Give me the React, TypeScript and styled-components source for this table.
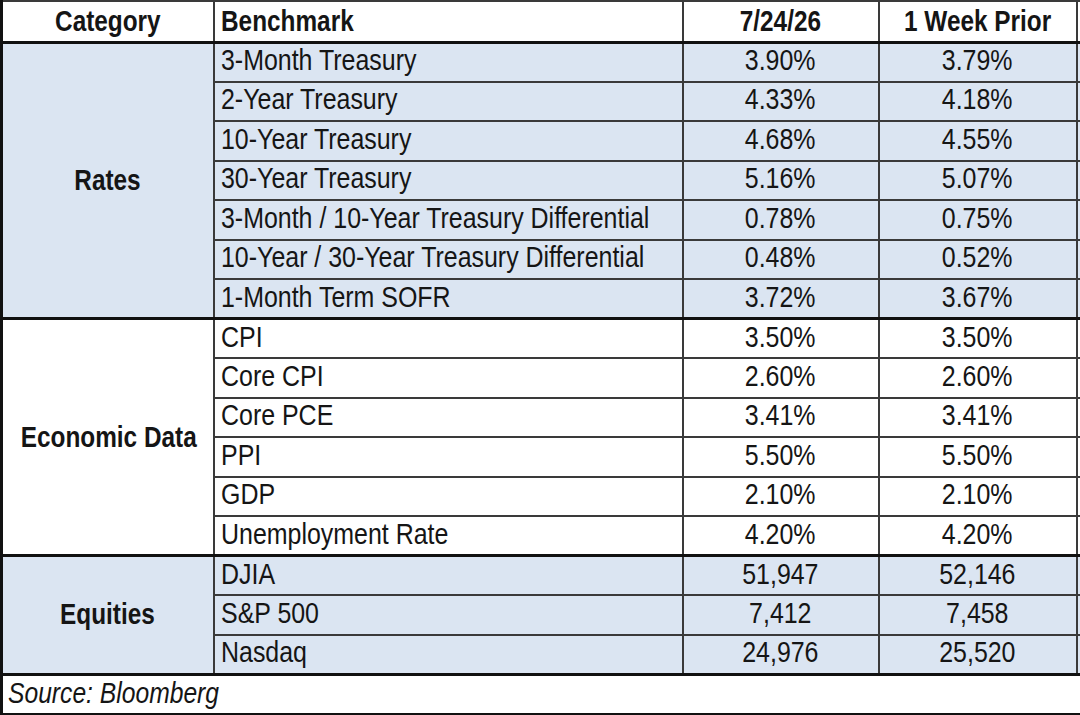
import React from 'react';
import styled, { createGlobalStyle } from 'styled-components';

const GlobalStyle = createGlobalStyle`
  html, body {
    margin: 0;
    padding: 0;
    background: #ffffff;
    overflow: hidden;
  }
`;

const Frame = styled.div`
  width: 1080px;
  height: 715px;
  overflow: hidden;
  background: #ffffff;
`;

const Table = styled.table`
  border-collapse: collapse;
  table-layout: fixed;
  width: 1116px;
  font-family: "Liberation Sans", Arial, sans-serif;
  font-size: 29px;
  color: #151515;
  border-left: 3px solid #111111;
  border-top: 1px solid #333333;
`;

// Excel's Arial Narrow look: squeeze the glyphs horizontally
const Narrow = styled.span<{ $origin?: 'left' | 'center'; $scale?: number }>`
  display: inline-block;
  white-space: nowrap;
  transform: scaleX(${p => p.$scale ?? 0.86});
  transform-origin: ${p => (p.$origin === 'left' ? 'left center' : 'center center')};
`;

const HeadRow = styled.tr`
  height: 41px;
  background: #ffffff;
`;

const HeadCell = styled.th<{ $align?: 'left' | 'center' }>`
  font-weight: bold;
  text-align: ${p => p.$align ?? 'center'};
  padding: 0 ${p => (p.$align === 'left' ? '6px' : '0')};
  border: 2px solid #3a3a3a;
  border-bottom: 3px solid #111111;
  white-space: nowrap;
  overflow: hidden;
`;

const BodyRow = styled.tr<{ $shaded: boolean; $groupStart: boolean }>`
  height: 39.5px;
  background: ${p => (p.$shaded ? '#dbe5f2' : '#ffffff')};

  & > td {
    border-top: ${p => (p.$groupStart ? '3px solid #111111' : '2px solid #3a3a3a')};
  }
`;

const CategoryCell = styled.td`
  font-weight: bold;
  text-align: center;
  vertical-align: middle;
  border: 2px solid #3a3a3a;
  white-space: nowrap;
  overflow: hidden;
`;

const Cell = styled.td<{ $align?: 'left' | 'center' }>`
  text-align: ${p => p.$align ?? 'center'};
  padding: 0 ${p => (p.$align === 'left' ? '6px' : '0')} 3px;
  border: 2px solid #3a3a3a;
  white-space: nowrap;
  overflow: hidden;
  line-height: 1;
`;

const SourceRow = styled.tr`
  height: 40px;

  & > td {
    border-top: 3px solid #111111;
    border-bottom: 2px solid #111111;
  }
`;

const SourceCell = styled.td`
  font-style: italic;
  text-align: left;
  padding: 0 5px 2px;
  white-space: nowrap;
`;

type Row = { name: string; now: string; prior: string };
type Group = { category: string; shaded: boolean; rows: Row[] };

const groups: Group[] = [
  {
    category: 'Rates',
    shaded: true,
    rows: [
      { name: '3-Month Treasury', now: '3.90%', prior: '3.79%' },
      { name: '2-Year Treasury', now: '4.33%', prior: '4.18%' },
      { name: '10-Year Treasury', now: '4.68%', prior: '4.55%' },
      { name: '30-Year Treasury', now: '5.16%', prior: '5.07%' },
      { name: '3-Month / 10-Year Treasury Differential', now: '0.78%', prior: '0.75%' },
      { name: '10-Year / 30-Year Treasury Differential', now: '0.48%', prior: '0.52%' },
      { name: '1-Month Term SOFR', now: '3.72%', prior: '3.67%' },
    ],
  },
  {
    category: 'Economic Data',
    shaded: false,
    rows: [
      { name: 'CPI', now: '3.50%', prior: '3.50%' },
      { name: 'Core CPI', now: '2.60%', prior: '2.60%' },
      { name: 'Core PCE', now: '3.41%', prior: '3.41%' },
      { name: 'PPI', now: '5.50%', prior: '5.50%' },
      { name: 'GDP', now: '2.10%', prior: '2.10%' },
      { name: 'Unemployment Rate', now: '4.20%', prior: '4.20%' },
    ],
  },
  {
    category: 'Equities',
    shaded: true,
    rows: [
      { name: 'DJIA', now: '51,947', prior: '52,146' },
      { name: 'S&P 500', now: '7,412', prior: '7,458' },
      { name: 'Nasdaq', now: '24,976', prior: '25,520' },
    ],
  },
];

const App: React.FC = () => {
  return (
    <>
      <GlobalStyle />
      <Frame>
        <Table>
          <colgroup>
            <col style={{ width: 212 }} />
            <col style={{ width: 469 }} />
            <col style={{ width: 196 }} />
            <col style={{ width: 198 }} />
            <col style={{ width: 41 }} />
          </colgroup>
          <thead>
            <HeadRow>
              <HeadCell><Narrow $scale={0.84}>Category</Narrow></HeadCell>
              <HeadCell $align="left"><Narrow $origin="left" $scale={0.84}>Benchmark</Narrow></HeadCell>
              <HeadCell><Narrow $scale={0.84}>7/24/26</Narrow></HeadCell>
              <HeadCell><Narrow $scale={0.84}>1 Week Prior</Narrow></HeadCell>
              <HeadCell />
            </HeadRow>
          </thead>
          <tbody>
            {groups.map(group =>
              group.rows.map((row, i) => (
                <BodyRow key={row.name} $shaded={group.shaded} $groupStart={i === 0}>
                  {i === 0 && (
                    <CategoryCell rowSpan={group.rows.length}>
                      <Narrow $scale={0.84}>{group.category}</Narrow>
                    </CategoryCell>
                  )}
                  <Cell $align="left"><Narrow $origin="left">{row.name}</Narrow></Cell>
                  <Cell><Narrow>{row.now}</Narrow></Cell>
                  <Cell><Narrow>{row.prior}</Narrow></Cell>
                  <Cell />
                </BodyRow>
              ))
            )}
            <SourceRow>
              <SourceCell colSpan={5}>
                <Narrow $origin="left" $scale={0.85}>Source: Bloomberg</Narrow>
              </SourceCell>
            </SourceRow>
          </tbody>
        </Table>
      </Frame>
    </>
  );
};

export default App;
